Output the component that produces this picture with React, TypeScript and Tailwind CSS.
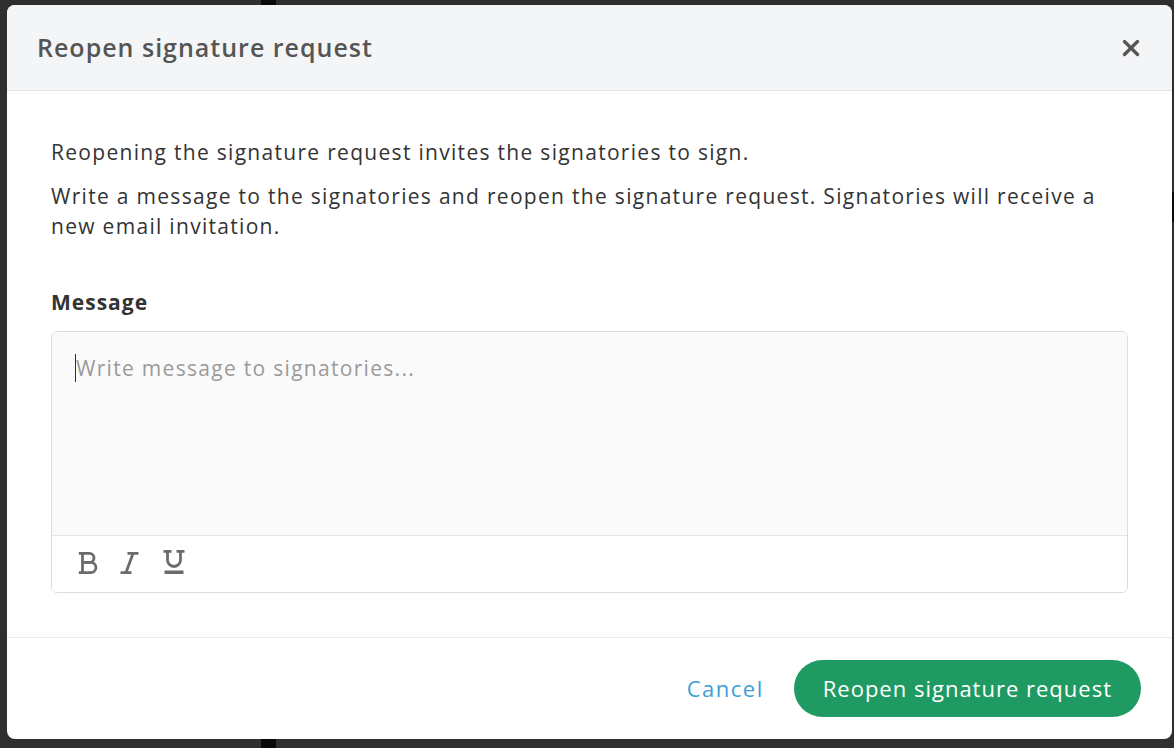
import { X } from "lucide-react";

const font = { fontFamily: "'Open Sans', Lato, sans-serif" };

function BoldIcon() {
  return (
    <svg width="20" height="22" viewBox="0 0 20 22" fill="none" stroke="currentColor" strokeWidth="2.8" strokeLinecap="butt" strokeLinejoin="miter">
      <path d="M4.5 1.4V20.6" />
      <path d="M0.8 1.4H11.5A4.5 4.5 0 0 1 11.5 10.4H4.5" />
      <path d="M4.5 10.4H12.8A5.1 5.1 0 0 1 12.8 20.6H0.8" />
    </svg>
  );
}

function ItalicIcon() {
  return (
    <svg width="19" height="22" viewBox="0 0 19 22" fill="none" stroke="currentColor" strokeWidth="2.8">
      <path d="M7.5 1.4H18.5" />
      <path d="M0.5 20.6H11.5" />
      <path d="M13 1.4L6 20.6" />
    </svg>
  );
}

function UnderlineIcon() {
  return (
    <svg width="22" height="24" viewBox="0 0 22 24" fill="none" stroke="currentColor" strokeWidth="2.8">
      <path d="M0.5 1.4H8.5" />
      <path d="M13.5 1.4H21.5" />
      <path d="M4.5 1.4V10A6.5 6.5 0 0 0 17.5 10V1.4" />
      <path d="M1.5 22.2H20.5" strokeWidth="3.4" />
    </svg>
  );
}

export default function App() {
  return (
    <div className="w-[1174px] h-[748px] bg-[#2f2f2f] relative overflow-hidden" style={font}>
      {/* background bits peeking out */}
      <div className="absolute left-[261px] top-0 w-[15px] h-[748px] bg-[#0a0a0a]" />
      <div className="absolute left-[1172px] top-[192px] w-[2px] h-[30px] bg-[#0a0a0a]" />

      <div className="absolute left-[7px] top-[5px] w-[1165px] h-[734px] bg-white rounded-[8px] overflow-hidden flex flex-col">
        <div className="h-[86px] shrink-0 bg-[#f4f5f7] border-b border-[#e3e4e6] flex items-center justify-between pl-[30px] pr-[28px]">
          <h2 className="text-[25px] font-semibold text-[#555555] tracking-[1px]">Reopen signature request</h2>
          <X className="w-[26px] h-[26px] text-[#555555]" strokeWidth={3} />
        </div>

        <div className="flex-1 px-[44px] pt-[46px]">
          <p className="text-[21px] leading-[30px] text-[#333333] tracking-[1.3px]">
            Reopening the signature request invites the signatories to sign.
          </p>
          <p className="mt-[14px] text-[21px] leading-[30px] text-[#333333] tracking-[1.3px]">
            Write a message to the signatories and reopen the signature request. Signatories will receive a new email invitation.
          </p>

          <div className="mt-[46px] text-[21px] font-bold text-[#333333] leading-[30px] tracking-[1px]">Message</div>

          <div className="mt-[14px] border border-[#dcdcdc] rounded-[6px] overflow-hidden">
            <div className="h-[203px] bg-[#fafafa] px-[23px] pt-[21px] flex items-start">
              <span className="w-px h-[28px] bg-[#333] mt-[1px]" />
              <span className="text-[21px] leading-[30px] text-[#9a9a9a] tracking-[1.3px]">Write message to signatories...</span>
            </div>
            <div className="h-[57px] border-t border-[#e6e6e6] bg-white flex items-start pt-[16px] pl-[26px] text-[#6b6b6b]">
              <BoldIcon />
              <div className="ml-[22px]">
                <ItalicIcon />
              </div>
              <div className="ml-[24px] -mt-[2px]">
                <UnderlineIcon />
              </div>
            </div>
          </div>
        </div>

        <div className="h-[102px] shrink-0 border-t border-[#ebebeb] flex items-center justify-end pr-[31px]">
          <button className="text-[22px] text-[#3b9fd8] mr-[30px] tracking-[1.5px]">Cancel</button>
          <button className="h-[57px] px-[29px] rounded-full bg-[#1f9a62] text-white text-[22px] tracking-[1px]">
            Reopen signature request
          </button>
        </div>
      </div>
    </div>
  );
}
